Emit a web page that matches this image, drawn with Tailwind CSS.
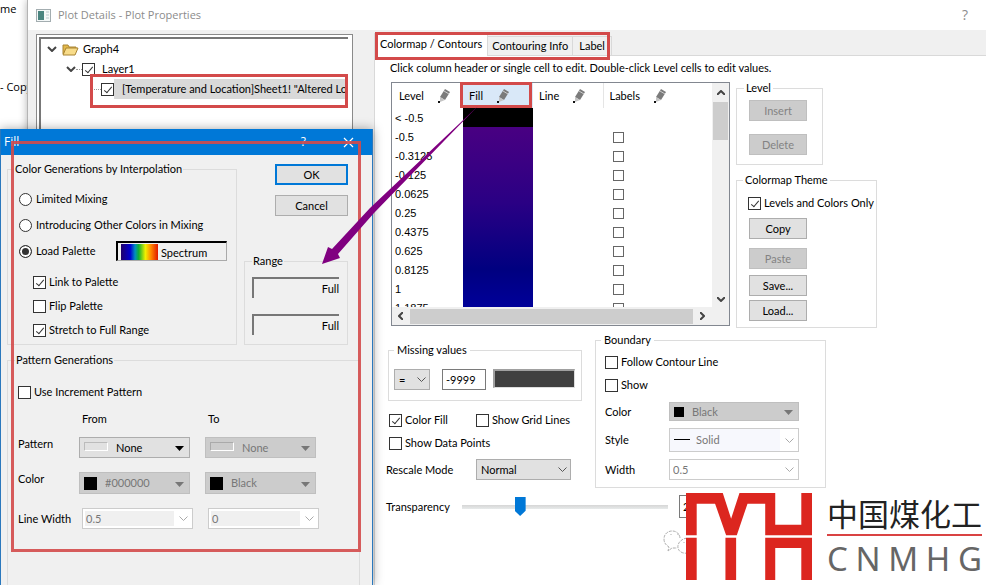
<!DOCTYPE html>
<html lang="en">
<head>
  <meta charset="UTF-8" />
  <meta name="viewport" content="width=device-width, initial-scale=1.0"/>
  <title>Plot Details - Plot Properties</title>
  <script src="https://cdn.jsdelivr.net/npm/@tailwindcss/browser@4"></script>
</head>
<body class="relative h-screen overflow-hidden bg-white font-[Lato,Arial,sans-serif] text-[11px] leading-[14px] text-black">

  <!-- Window behind -->
  <div class="flex flex-col gap-[64px] pt-[2px] font-['Open_Sans',sans-serif] text-[11px]">
    <span>me</span>
    <span>- Copy</span>
  </div>

  <!-- Plot Details window -->
  <section class="absolute inset-y-0 left-[27px] right-0 flex flex-col border-l border-[#b4b4b4] bg-[#f0f0f0] shadow-[0_0_8px_rgba(0,0,0,0.3)]">
    <header class="flex h-[30px] shrink-0 items-center gap-[7px] bg-white pl-2 pr-[18px] font-['Open_Sans',sans-serif] text-[11px] text-[#8c8c8c]">
      <svg width="15" height="13" viewBox="0 0 15 13"><rect x=".5" y=".5" width="14" height="12" fill="#f4f8f8" stroke="#a3adb0"/><rect x="2" y="2" width="6" height="9" fill="#4a8580"/><path d="M10 3h3M10 6h3M10 9h3" stroke="#b9c8cc"/></svg>
      <h1 class="flex-1">Plot Details - Plot Properties</h1>
      <button aria-label="Help" class="text-[14px]">?</button>
    </header>

    <div class="flex flex-1 gap-[21px] pl-2">
      <!-- Tree -->
      <div class="mt-1 w-[317px] shrink-0 border border-[#8a8a8a] bg-white p-[2px] pr-1">
        <ul class="h-full overflow-hidden border-l-2 border-t-2 border-[#777]">
          <li class="flex h-5 items-center pl-1.5">
            <svg width="10" height="6" viewBox="0 0 10 6" fill="none" stroke="#444" stroke-width="2"><path d="M1 1l4 4 4-4"/></svg>
            <svg class="ml-[5px]" width="17" height="13" viewBox="0 0 17 13"><path d="M1 11V2h5l1 2h7v3" fill="#e3b94a" stroke="#a98432"/><path d="M1 12L4 5h12l-3 7z" fill="#f8dc8a" stroke="#a98432"/></svg>
            <span class="ml-1">Graph4</span>
          </li>
          <li class="flex h-5 items-center pl-[25px]">
            <svg width="10" height="6" viewBox="0 0 10 6" fill="none" stroke="#444" stroke-width="2"><path d="M1 1l4 4 4-4"/></svg>
            <span class="w-[6px] border-t border-dotted border-[#999]"></span>
            <label class="flex items-center gap-[7px]"><input type="checkbox" checked class="relative size-[13px] shrink-0 appearance-none border border-[#333] bg-white after:absolute after:left-[4px] after:top-px after:hidden after:h-[8px] after:w-[4px] after:rotate-40 after:border-b after:border-r after:border-[#333] checked:after:block" />Layer1</label>
          </li>
          <li class="flex h-5 items-center pl-[50px]">
            <span class="w-[10px] border-t border-dotted border-[#999]"></span>
            <label class="flex flex-1 items-center whitespace-nowrap"><input type="checkbox" checked class="relative size-[13px] shrink-0 appearance-none border border-[#333] bg-white after:absolute after:left-[4px] after:top-px after:hidden after:h-[8px] after:w-[4px] after:rotate-40 after:border-b after:border-r after:border-[#333] checked:after:block" /><span class="flex-1 bg-[#d9d9d9] py-[3px] pl-[8px]">[Temperature and Location]Sheet1! "Altered Lo</span></label>
          </li>
        </ul>
      </div>

      <!-- Tabs -->
      <main class="flex flex-1 flex-col">
        <div role="tablist" class="flex h-[26px] shrink-0 items-end border-b border-[#d9d9d9]">
          <button role="tab" aria-selected="true" class="-mb-px h-[23px] border border-b-0 border-[#d9d9d9] bg-white px-[5px] pb-[3px]">Colormap / Contours</button>
          <button role="tab" class="h-[19px] border-r border-t border-[#d9d9d9] px-1">Contouring Info</button>
          <button role="tab" class="h-[19px] border-r border-t border-[#d9d9d9] px-[6px]">Label</button>
        </div>

        <div class="flex-1 border-l border-[#d9d9d9] bg-white pl-[11px] pt-[5px]">
          <p class="pl-1">Click column header or single cell to edit. Double-click Level cells to edit values.</p>

          <div class="flex items-start gap-1.5 pl-[5px] pt-[6px]">
            <!-- Level list -->
            <div class="mt-px flex h-[244px] w-[339px] flex-col border border-[#828790]">
              <div class="flex flex-1 overflow-hidden">
                <div class="h-[224px] flex-1 overflow-hidden">
                  <table class="w-full table-fixed border-collapse">
                    <thead>
                      <tr class="h-[25px] text-left">
                        <th class="w-[71px] pl-[7px] font-normal"><span class="flex items-center gap-[13px]">Level
                          <svg width="14" height="16" viewBox="0 0 14 16"><path d="M8 1l5 3-5 8-5-3z" fill="#7b7b7b"/><path d="M7 3l5 3" stroke="#ccc"/><path d="M3 9l5 3-5 2z" fill="#c4c4c4"/><path d="M1 13h2v2H1z" fill="#111"/></svg></span></th>
                        <th class="w-[70px] bg-[#d9e8f8] pl-[6px] font-normal"><span class="flex items-center gap-[13px]">Fill
                          <svg width="14" height="16" viewBox="0 0 14 16"><path d="M8 1l5 3-5 8-5-3z" fill="#7b7b7b"/><path d="M7 3l5 3" stroke="#ccc"/><path d="M3 9l5 3-5 2z" fill="#c4c4c4"/><path d="M1 13h2v2H1z" fill="#111"/></svg></span></th>
                        <th class="w-[70px] border-r border-[#e5e5e5] pl-[6px] font-normal"><span class="flex items-center gap-[13px]">Line
                          <svg width="14" height="16" viewBox="0 0 14 16"><path d="M8 1l5 3-5 8-5-3z" fill="#7b7b7b"/><path d="M7 3l5 3" stroke="#ccc"/><path d="M3 9l5 3-5 2z" fill="#c4c4c4"/><path d="M1 13h2v2H1z" fill="#111"/></svg></span></th>
                        <th class="pl-[6px] font-normal"><span class="flex items-center gap-[13px]">Labels
                          <svg width="14" height="16" viewBox="0 0 14 16"><path d="M8 1l5 3-5 8-5-3z" fill="#7b7b7b"/><path d="M7 3l5 3" stroke="#ccc"/><path d="M3 9l5 3-5 2z" fill="#c4c4c4"/><path d="M1 13h2v2H1z" fill="#111"/></svg></span></th>
                      </tr>
                    </thead>
                    <tbody id="levels" class="font-['Liberation_Sans',Arial,sans-serif]"></tbody>
                  </table>
                </div>
                <div class="flex w-[17px] flex-col items-center bg-[#f0f0f0]">
                  <svg class="my-[7px] shrink-0" width="8" height="5" viewBox="0 0 8 5" fill="none" stroke="#444" stroke-width="2"><path d="M0 5l4-4 4 4"/></svg>
                  <div class="h-[38px] w-[15px] bg-[#cdcdcd]"></div>
                  <svg class="mb-[5px] mt-auto shrink-0" width="8" height="5" viewBox="0 0 8 5" fill="none" stroke="#444" stroke-width="2"><path d="M0 0l4 4 4-4"/></svg>
                </div>
              </div>
              <div class="flex h-[18px] items-center bg-[#f0f0f0] pl-[6px]">
                <svg width="5" height="8" viewBox="0 0 5 8" fill="none" stroke="#444" stroke-width="2"><path d="M5 0L1 4l4 4"/></svg>
                <div class="ml-[7px] h-[15px] w-[283px] bg-[#cdcdcd]"></div>
                <svg class="ml-[7px]" width="5" height="8" viewBox="0 0 5 8" fill="none" stroke="#444" stroke-width="2"><path d="M0 0l4 4-4 4"/></svg>
              </div>
            </div>

            <div class="flex flex-col items-start gap-2">
              <fieldset class="flex h-[84px] w-[87px] flex-col gap-[13px] border border-[#dcdcdc] pl-3 pt-[5px]">
                <legend class="-ml-[5px] px-[2px]">Level</legend>
                <button disabled class="h-[21px] w-[58px] border border-[#bfbfbf] bg-[#ccc] text-[#838383]">Insert</button>
                <button disabled class="h-[21px] w-[58px] border border-[#bfbfbf] bg-[#ccc] text-[#838383]">Delete</button>
              </fieldset>
              <fieldset class="h-[155px] w-[141px] min-w-0 border border-[#dcdcdc] pl-[11px] pt-[9px]">
                <legend class="-ml-[5px] px-[2px]">Colormap Theme</legend>
                <label class="flex items-center gap-[3px] whitespace-nowrap"><input type="checkbox" checked class="relative size-[13px] shrink-0 appearance-none border border-[#333] bg-white after:absolute after:left-[4px] after:top-px after:hidden after:h-[8px] after:w-[4px] after:rotate-40 after:border-b after:border-r after:border-[#333] checked:after:block" />Levels and Colors Only</label>
                <div class="flex flex-col pl-px pt-2">
                  <button class="h-[21px] w-[58px] border border-[#adadad] bg-[#e1e1e1]">Copy</button>
                  <button disabled class="mt-[9px] h-[21px] w-[58px] border border-[#bfbfbf] bg-[#ccc] text-[#838383]">Paste</button>
                  <button class="mt-[6px] h-[21px] w-[58px] border border-[#adadad] bg-[#e1e1e1]">Save...</button>
                  <button class="mt-1 h-[21px] w-[58px] border border-[#adadad] bg-[#e1e1e1]">Load...</button>
                </div>
              </fieldset>
            </div>
          </div>

          <div class="flex items-start gap-[13px] pt-[5px]">
            <div class="w-[196px] pt-[10px]">
              <fieldset class="ml-[2px] flex h-[58px] items-start border border-[#dcdcdc] pl-[5px] pt-3">
                <legend class="px-[3px]">Missing values</legend>
                <div class="relative">
                  <select aria-label="Missing operator" class="h-[21px] w-9 appearance-none border border-[#adadad] bg-[#e1e1e1] pl-1"><option>=</option></select>
                  <svg class="pointer-events-none absolute right-1 top-2" width="9" height="5" viewBox="0 0 9 5" fill="none" stroke="#555"><path d="M.5.5l4 4 4-4"/></svg>
                </div>
                <input aria-label="Missing value" value="-9999" class="ml-3 h-[21px] w-11 border border-[#7a7a7a] bg-white pl-[3px]" />
                <button aria-label="Missing value color" class="ml-[7px] h-[19px] w-[82px] border-2 border-b border-r border-[#a0a0a0] border-b-[#ddd] border-r-[#ddd] bg-[#404040]"></button>
              </fieldset>
              <div class="grid grid-cols-[87px_1fr] items-center gap-y-[9px] pl-[3px] pt-3">
                <label class="flex items-center gap-[3px]"><input type="checkbox" checked class="relative size-[13px] shrink-0 appearance-none border border-[#333] bg-white after:absolute after:left-[4px] after:top-px after:hidden after:h-[8px] after:w-[4px] after:rotate-40 after:border-b after:border-r after:border-[#333] checked:after:block" />Color Fill</label>
                <label class="flex items-center gap-[3px] whitespace-nowrap"><input type="checkbox" class="size-[13px] shrink-0 appearance-none border border-[#333] bg-white" />Show Grid Lines</label>
                <label class="col-span-2 flex items-center gap-[3px]"><input type="checkbox" class="size-[13px] shrink-0 appearance-none border border-[#333] bg-white" />Show Data Points</label>
              </div>
              <div class="flex items-center pt-[9px]">
                <label for="rescale" class="w-[90px]">Rescale Mode</label>
                <div class="relative">
                  <select id="rescale" class="h-[21px] w-[95px] appearance-none border border-[#adadad] bg-[#e1e1e1] pl-1"><option>Normal</option></select>
                  <svg class="pointer-events-none absolute right-1 top-2" width="9" height="5" viewBox="0 0 9 5" fill="none" stroke="#555"><path d="M.5.5l4 4 4-4"/></svg>
                </div>
              </div>
            </div>

            <fieldset class="h-[155px] w-[231px] border border-[#dcdcdc] pl-[9px] pt-2">
              <legend class="-ml-1 px-[3px]">Boundary</legend>
              <label class="flex items-center gap-[3px]"><input type="checkbox" class="size-[13px] shrink-0 appearance-none border border-[#333] bg-white" />Follow Contour Line</label>
              <label class="flex items-center gap-[3px] pt-[9px]"><input type="checkbox" class="size-[13px] shrink-0 appearance-none border border-[#333] bg-white" />Show</label>
              <div class="grid grid-cols-[64px_130px] items-center gap-y-[7px] pt-[10px]">
                <label for="bColor">Color</label>
                <div class="relative">
                  <select id="bColor" disabled class="h-[19px] w-full appearance-none border border-[#bfbfbf] bg-[#ccc] pl-[22px] text-[#777] opacity-100"><option>Black</option></select>
                  <span class="absolute left-[5px] top-[5px] size-[10px] bg-black"></span>
                  <svg class="absolute right-[6px] top-[8px]" width="9" height="5" viewBox="0 0 9 5" fill="#777"><path d="M0 0h9L4.500 5z"/></svg>
                </div>
                <label for="bStyle">Style</label>
                <div class="relative">
                  <select id="bStyle" disabled class="h-6 w-full appearance-none border border-[#ccc] bg-[#f7f8fd] pl-[26px] text-[#777] opacity-100"><option>Solid</option></select>
                  <span class="absolute left-[5px] top-[11px] w-4 border-t border-black"></span>
                  <span class="absolute right-px top-px flex h-[22px] w-[18px] items-center justify-center bg-white"><svg width="9" height="5" viewBox="0 0 9 5" fill="none" stroke="#aaa"><path d="M.5.5l4 4 4-4"/></svg></span>
                </div>
                <label for="bWidth">Width</label>
                <div class="relative">
                  <select id="bWidth" disabled class="h-[21px] w-full appearance-none border border-[#ccc] bg-white pl-[3px] text-[#777] opacity-100"><option>0.5</option></select>
                  <svg class="absolute right-[5px] top-2" width="9" height="5" viewBox="0 0 9 5" fill="none" stroke="#aaa"><path d="M.5.5l4 4 4-4"/></svg>
                </div>
              </div>
            </fieldset>
          </div>

          <div class="flex items-center pt-[7px]">
            <label for="transparency" class="w-[76px]">Transparency</label>
            <input id="transparency" type="range" min="0" max="100" value="27" class="h-5 w-[206px] appearance-none bg-[linear-gradient(#d6d6d6,#e7eaea)] bg-[length:100%_4px] bg-center bg-no-repeat [&::-webkit-slider-thumb]:h-[19px] [&::-webkit-slider-thumb]:w-[11px] [&::-webkit-slider-thumb]:appearance-none [&::-webkit-slider-thumb]:bg-[#0078d7] [&::-webkit-slider-thumb]:[clip-path:polygon(0_0,100%_0,100%_72%,50%_100%,0_72%)]" />
            <input aria-label="Transparency percent" value="27" class="ml-[11px] h-[23px] w-10 border border-[#7a7a7a] bg-white pl-[3px]" />
          </div>
        </div>
      </main>
    </div>
  </section>

  <!-- Fill dialog -->
  <section class="absolute bottom-0 left-0 top-[129px] flex w-[373px] flex-col overflow-hidden border-x border-[#2a78bd] bg-[#f0f0f0] shadow-[0_0_10px_rgba(0,0,0,0.35)]">
    <header class="flex h-[26px] shrink-0 items-center bg-[#0078d7] pl-[3px] pr-[18px] font-['Open_Sans',sans-serif] text-[12px] text-white">
      <h2 class="flex-1">Fill</h2>
      <button aria-label="Help" class="mr-[37px]">?</button>
      <button aria-label="Close"><svg width="11" height="11" viewBox="0 0 11 11" stroke="#fff" stroke-width="1.200"><path d="M1 1l9 9M10 1l-9 9"/></svg></button>
    </header>

    <div class="flex items-start gap-[7px] pl-[6px] pt-[7px]">
      <fieldset class="h-[183px] w-[230px] border border-[#dcdcdc] pl-[11px] pt-[10px]">
        <legend class="-ml-[5px] px-px">Color Generations by Interpolation</legend>
        <label class="flex h-[26px] items-center gap-1"><input type="radio" name="mixing" class="size-[13px] appearance-none rounded-full border border-[#333] bg-white" />Limited Mixing</label>
        <label class="flex h-[26px] items-center gap-1"><input type="radio" name="mixing" class="size-[13px] appearance-none rounded-full border border-[#333] bg-white" />Introducing Other Colors in Mixing</label>
        <div class="flex h-[26px] items-center">
          <label class="flex w-[97px] items-center gap-1"><input type="radio" name="mixing" checked class="size-[13px] appearance-none rounded-full border border-[#333] bg-[#333] shadow-[inset_0_0_0_2px_#fff]" />Load Palette</label>
          <div class="relative">
            <select aria-label="Palette" class="h-5 w-[111px] appearance-none border-l-2 border-t-2 border-b border-r border-black border-b-[#aaa] border-r-[#aaa] bg-[#f0f0f0] pl-[43px] pt-[2px]"><option>Spectrum</option></select>
            <span class="absolute bottom-px left-[5px] top-[3px] w-[37px] bg-[linear-gradient(90deg,#20006a_0%,#0000d0_25%,#0090c0_38%,#10b030_48%,#f0f000_66%,#ff8000_82%,#e01800_100%)]"></span>
          </div>
        </div>
        <div class="pl-[14px] pt-[6px]">
          <label class="flex h-6 items-center gap-[3px]"><input type="checkbox" checked class="relative size-[13px] shrink-0 appearance-none border border-[#333] bg-white after:absolute after:left-[4px] after:top-px after:hidden after:h-[8px] after:w-[4px] after:rotate-40 after:border-b after:border-r after:border-[#333] checked:after:block" />Link to Palette</label>
          <label class="flex h-6 items-center gap-[3px]"><input type="checkbox" class="size-[13px] shrink-0 appearance-none border border-[#333] bg-white" />Flip Palette</label>
          <label class="flex h-6 items-center gap-[3px]"><input type="checkbox" checked class="relative size-[13px] shrink-0 appearance-none border border-[#333] bg-white after:absolute after:left-[4px] after:top-px after:hidden after:h-[8px] after:w-[4px] after:rotate-40 after:border-b after:border-r after:border-[#333] checked:after:block" />Stretch to Full Range</label>
        </div>
      </fieldset>

      <div class="flex w-[105px] flex-col items-end pr-px pt-[2px]">
        <button class="h-[21px] w-[73px] border-2 border-[#0078d7] bg-[#e1e1e1]">OK</button>
        <button class="mt-[10px] h-[21px] w-[73px] border border-[#adadad] bg-[#e1e1e1]">Cancel</button>
        <fieldset class="mt-[38px] flex h-[91px] w-full flex-col gap-4 border border-[#dcdcdc] pl-[7px] pt-[9px]">
          <legend class="px-px">Range</legend>
          <input aria-label="Range from" value="Full" class="h-[21px] w-[87px] border-l-2 border-t-2 border-[#777] text-right" />
          <input aria-label="Range to" value="Full" class="h-[21px] w-[87px] border-l-2 border-t-2 border-[#777] text-right" />
        </fieldset>
      </div>
    </div>

    <fieldset class="ml-[6px] mr-3 mt-2 flex-1 border border-b-0 border-[#dcdcdc] pl-[10px] pt-[18px]">
      <legend class="-ml-[3px] px-px">Pattern Generations</legend>
      <label class="flex items-center gap-[3px]"><input type="checkbox" class="size-[13px] shrink-0 appearance-none border border-[#333] bg-white" />Use Increment Pattern</label>
      <div class="grid grid-cols-[46px_111px_111px] gap-x-[15px] pt-[13px]">
        <span class="col-start-2 pl-[3px]">From</span>
        <span class="pl-[3px]">To</span>
      </div>
      <div class="grid grid-cols-[46px_111px_111px] gap-x-[15px] gap-y-[14px] whitespace-nowrap pt-[11px]">
        <label for="patFrom">Pattern</label>
        <div class="relative">
          <select id="patFrom" class="h-[21px] w-full appearance-none border border-[#adadad] bg-[#e1e1e1] pl-9"><option>None</option></select>
          <span class="absolute left-[5px] top-[5px] h-[9px] w-6 border border-[#bbb] border-b-white border-r-white"></span>
          <svg class="absolute right-[6px] top-[9px]" width="9" height="5" viewBox="0 0 9 5"><path d="M0 0h9L4.500 5z"/></svg>
        </div>
        <div class="relative">
          <select aria-label="Pattern to" disabled class="h-[21px] w-full appearance-none border border-[#bfbfbf] bg-[#ccc] pl-9 text-[#777] opacity-100"><option>None</option></select>
          <span class="absolute left-[5px] top-[5px] h-[9px] w-6 border border-[#aaa] border-b-white border-r-white"></span>
          <svg class="absolute right-[6px] top-[9px]" width="9" height="5" viewBox="0 0 9 5" fill="#777"><path d="M0 0h9L4.500 5z"/></svg>
        </div>
        <label for="colFrom">Color</label>
        <div class="relative">
          <select id="colFrom" disabled class="h-[22px] w-full appearance-none border border-[#bfbfbf] bg-[#ccc] pl-[25px] text-[#777] opacity-100"><option>#000000</option></select>
          <span class="absolute left-[5px] top-[5px] size-[13px] bg-black"></span>
          <svg class="absolute right-[6px] top-[10px]" width="9" height="5" viewBox="0 0 9 5" fill="#777"><path d="M0 0h9L4.500 5z"/></svg>
        </div>
        <div class="relative">
          <select aria-label="Color to" disabled class="h-[22px] w-full appearance-none border border-[#bfbfbf] bg-[#ccc] pl-[25px] text-[#777] opacity-100"><option>Black</option></select>
          <span class="absolute left-[5px] top-[5px] size-[13px] bg-black"></span>
          <svg class="absolute right-[6px] top-[10px]" width="9" height="5" viewBox="0 0 9 5" fill="#777"><path d="M0 0h9L4.500 5z"/></svg>
        </div>
        <label for="lwFrom" class="self-center">Line Width</label>
        <div class="relative ml-[3px] w-full">
          <select id="lwFrom" disabled class="h-[21px] w-full appearance-none border border-[#ccc] bg-[#f0f0f0] pl-[3px] text-[#777] opacity-100 shadow-[inset_0_0_0_2px_#fff]"><option>0.5</option></select>
          <span class="absolute right-px top-px flex h-[19px] w-[18px] items-center justify-center bg-white"><svg width="9" height="5" viewBox="0 0 9 5" fill="none" stroke="#aaa"><path d="M.5.5l4 4 4-4"/></svg></span>
        </div>
        <div class="relative ml-[3px] w-full">
          <select aria-label="Line width to" disabled class="h-[21px] w-full appearance-none border border-[#ccc] bg-[#f0f0f0] pl-[3px] text-[#777] opacity-100 shadow-[inset_0_0_0_2px_#fff]"><option>0</option></select>
          <span class="absolute right-px top-px flex h-[19px] w-[18px] items-center justify-center bg-white"><svg width="9" height="5" viewBox="0 0 9 5" fill="none" stroke="#aaa"><path d="M.5.5l4 4 4-4"/></svg></span>
        </div>
      </div>
    </fieldset>
  </section>

  <!-- Highlights -->
  <div class="pointer-events-none absolute left-[90px] top-[74px] h-[34px] w-[258px] border-3 border-[#d34a4a]"></div>
  <div class="pointer-events-none absolute left-[375px] top-[32px] h-[28px] w-[235px] border-3 border-[#d34a4a]"></div>
  <div class="pointer-events-none absolute left-[460px] top-[82px] h-[26px] w-[72px] border-3 border-[#d34a4a]"></div>
  <div class="pointer-events-none absolute left-[11px] top-[141px] h-[411px] w-[350px] border-3 border-[#d34a4a]/90"></div>
  <svg class="pointer-events-none absolute left-[320px] top-[104px]" width="160" height="164" viewBox="320 104 160 164"><path d="M478 106L374 213 338 254 340 258 322 264 328 247 332 249 370 208z" fill="#800080"/></svg>

  <!-- Watermark -->
  <svg class="absolute left-[663px] top-[528px]" width="28" height="26" viewBox="0 0 28 26" fill="none" stroke="#999" stroke-width=".8" stroke-dasharray="3 1"><path d="M17 10C16 0 1 1 1 11c0 4 2 6 5 8l-1 4 4-3h5"/><path d="M28 10c-9-1-14 5-13 10 1 4 5 6 11 5"/><path d="M8 6v1M15 6v1M21 14v1"/></svg>
  <div class="absolute bottom-[5px] right-1 flex items-center gap-[15px]">
    <svg class="bg-white" width="126" height="87" viewBox="138 38 377 261" preserveAspectRatio="none" fill="#dc261f"><path d="M138 38H248L273 115 298 38H405V133H483V38H515V165H375V70H322L290 165H258L225 70H170V165H138z"/><path d="M138 172h32v127h-32zM256 172h32v127h-32zM375 172H515V299H483V203H405V299H375z"/></svg>
    <div class="flex w-[155px] flex-col">
      <span class="whitespace-nowrap font-['Noto_Sans_CJK_SC',sans-serif] text-[31px] leading-[32px] text-[#222]">中国煤化工</span>
      <span class="mt-[5px] h-[2px] bg-[#d94343]"></span>
      <span class="mt-[5px] flex justify-between font-['Noto_Sans',sans-serif] text-[33px] leading-[36px] text-[#666]"><span>C</span><span>N</span><span>M</span><span>H</span><span>G</span></span>
    </div>
  </div>

  <script>
    const levels = ["< -0.5", "-0.5", "-0.3125", "-0.125", "0.0625", "0.25", "0.4375", "0.625", "0.8125", "1", "1.1875"];
    const body = document.getElementById("levels");

    levels.forEach((level, i) => {
      const row = document.createElement("tr");
      row.className = "h-[19px]";
      let fill = "";
      if (i === 0) fill = `<td class="bg-black"></td>`;
      if (i === 1) fill = `<td rowspan="10" class="bg-[linear-gradient(#490082,#2a0084_40%,#000080_75%,#0000a0)]"></td>`;
      const box = i === 0 ? "" : `<input type="checkbox" aria-label="Label ${level}" class="mt-[2px] block size-[11px] appearance-none border border-[#666] bg-white" />`;
      row.innerHTML = `<td class="pl-[3px]">${level}</td>${fill}<td></td><td class="pl-[10px]">${box}</td>`;
      body.appendChild(row);
    });
  </script>
</body>
</html>
